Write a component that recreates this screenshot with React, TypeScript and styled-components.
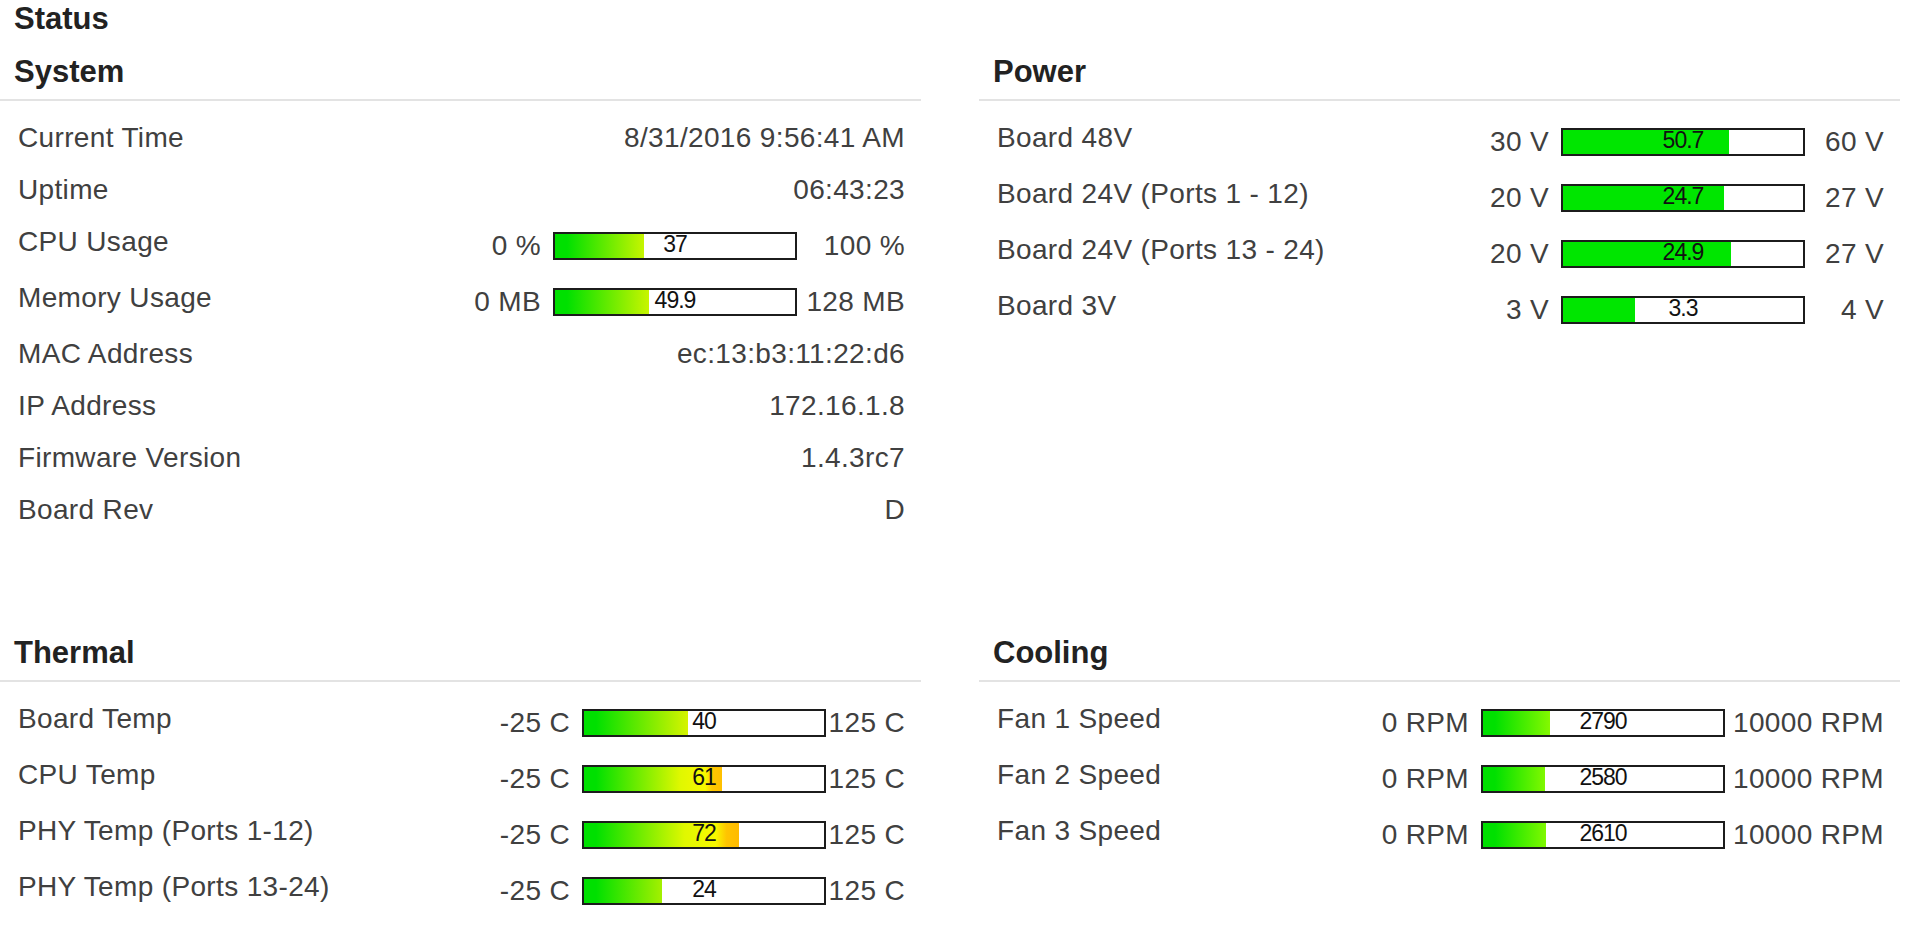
import React from "react";
import styled, { createGlobalStyle } from "styled-components";

interface Meter {
  min: string;
  max: string;
  lo: number;
  hi: number;
  value: number;
  text: string;
  fill: string;
}

interface StatRow {
  label: string;
  value?: string;
  meter?: Meter;
}

interface Section {
  title: string;
  maxWidth: number;
  rows: StatRow[];
}

// warm ramp: green at the start of the fill, a value-dependent colour at its end
const ramp = (...stops: string[]) =>
  `linear-gradient(90deg, #00e000 12px, ${stops.join(", ")})`;
const SOLID = "#00e600";

const system: Section = {
  title: "System",
  maxWidth: 108,
  rows: [
    { label: "Current Time", value: "8/31/2016 9:56:41 AM" },
    { label: "Uptime", value: "06:43:23" },
    {
      label: "CPU Usage",
      meter: { min: "0 %", max: "100 %", lo: 0, hi: 100, value: 37, text: "37", fill: ramp("#c6f500 100%") },
    },
    {
      label: "Memory Usage",
      meter: { min: "0 MB", max: "128 MB", lo: 0, hi: 128, value: 49.9, text: "49.9", fill: ramp("#c8f500 100%") },
    },
    { label: "MAC Address", value: "ec:13:b3:11:22:d6" },
    { label: "IP Address", value: "172.16.1.8" },
    { label: "Firmware Version", value: "1.4.3rc7" },
    { label: "Board Rev", value: "D" },
  ],
};

const power: Section = {
  title: "Power",
  maxWidth: 79,
  rows: [
    { label: "Board 48V", meter: { min: "30 V", max: "60 V", lo: 30, hi: 60, value: 50.7, text: "50.7", fill: SOLID } },
    { label: "Board 24V (Ports 1 - 12)", meter: { min: "20 V", max: "27 V", lo: 20, hi: 27, value: 24.7, text: "24.7", fill: SOLID } },
    { label: "Board 24V (Ports 13 - 24)", meter: { min: "20 V", max: "27 V", lo: 20, hi: 27, value: 24.9, text: "24.9", fill: SOLID } },
    { label: "Board 3V", meter: { min: "3 V", max: "4 V", lo: 3, hi: 4, value: 3.3, text: "3.3", fill: SOLID } },
  ],
};

const thermal: Section = {
  title: "Thermal",
  maxWidth: 79,
  rows: [
    { label: "Board Temp", meter: { min: "-25 C", max: "125 C", lo: -25, hi: 125, value: 40, text: "40", fill: ramp("#d6f400 100%") } },
    {
      label: "CPU Temp",
      meter: { min: "-25 C", max: "125 C", lo: -25, hi: 125, value: 61, text: "61", fill: ramp("#e0f800 70%", "#f8f800 88%", "#ffc800 93%", "#ffc000 100%") },
    },
    {
      label: "PHY Temp (Ports 1-12)",
      meter: { min: "-25 C", max: "125 C", lo: -25, hi: 125, value: 72, text: "72", fill: ramp("#e0f800 65%", "#f8f800 85%", "#ffc400 92%", "#ffbb00 100%") },
    },
    { label: "PHY Temp (Ports 13-24)", meter: { min: "-25 C", max: "125 C", lo: -25, hi: 125, value: 24, text: "24", fill: ramp("#a4f000 100%") } },
  ],
};

const cooling: Section = {
  title: "Cooling",
  maxWidth: 159,
  rows: [
    { label: "Fan 1 Speed", meter: { min: "0 RPM", max: "10000 RPM", lo: 0, hi: 10000, value: 2790, text: "2790", fill: ramp("#84f800 100%") } },
    { label: "Fan 2 Speed", meter: { min: "0 RPM", max: "10000 RPM", lo: 0, hi: 10000, value: 2580, text: "2580", fill: ramp("#80f800 100%") } },
    { label: "Fan 3 Speed", meter: { min: "0 RPM", max: "10000 RPM", lo: 0, hi: 10000, value: 2610, text: "2610", fill: ramp("#80f800 100%") } },
  ],
};

const sections = [system, power, thermal, cooling];

const App = () => {
  return (
    <Page>
      <GlobalStyle />
      <PageTitle>Status</PageTitle>
      <Grid>
        {sections.map((section) => (
          <Panel key={section.title}>
            <PanelTitle>{section.title}</PanelTitle>
            <RowList>
              {section.rows.map((row) => (
                <Row key={row.label}>
                  <Label>{row.label}</Label>
                  {row.meter ? (
                    <Range>
                      <MinLabel>{row.meter.min}</MinLabel>
                      <Bar>
                        <Fill
                          $fill={row.meter.fill}
                          style={{
                            width: `${((row.meter.value - row.meter.lo) / (row.meter.hi - row.meter.lo)) * 100}%`,
                          }}
                        />
                        <BarText>{row.meter.text}</BarText>
                      </Bar>
                      <MaxLabel $width={section.maxWidth}>{row.meter.max}</MaxLabel>
                    </Range>
                  ) : (
                    <Value>{row.value}</Value>
                  )}
                </Row>
              ))}
            </RowList>
          </Panel>
        ))}
      </Grid>
    </Page>
  );
};
export default App;

const GlobalStyle = createGlobalStyle`
  html, body {
    margin: 0;
    padding: 0;
    background: #fff;
  }

  body {
    font-family: "Liberation Sans", Arial, sans-serif;
    color: #404040;
  }
`;

const Page = styled.div`
  width: 1924px;
  min-height: 926px;
  box-sizing: border-box;
`;

const PageTitle = styled.h1`
  margin: 2px 0 0;
  padding: 0 14px;
  font-size: 31px;
  line-height: 34px;
  font-weight: bold;
  color: #222;
`;

const Grid = styled.div`
  display: grid;
  grid-template-columns: 921px 921px;
  column-gap: 58px;
  row-gap: 100px;
  margin-top: 19px;
`;

const Panel = styled.section`
  display: flex;
  flex-direction: column;
`;

const PanelTitle = styled.h2`
  margin: 0;
  padding: 0 14px 10px;
  font-size: 31px;
  line-height: 34px;
  font-weight: bold;
  color: #222;
  border-bottom: 2px solid #e3e3e3;
`;

const RowList = styled.div`
  display: flex;
  flex-direction: column;
  padding-top: 11px;
`;

const Row = styled.div`
  display: flex;
  justify-content: space-between;
  align-items: flex-start;
  padding: 10px 16px 10px 18px;
  font-size: 28px;
  line-height: 32px;
  letter-spacing: 0.35px;
`;

const Label = styled.span`
  white-space: nowrap;
`;

const Value = styled.span`
  white-space: nowrap;
  text-align: right;
`;

const Range = styled.div`
  display: flex;
  align-items: center;
  margin-top: 4px;
`;

const MinLabel = styled.span`
  margin-right: 12px;
  white-space: nowrap;
  text-align: right;
`;

const MaxLabel = styled.span<{ $width: number }>`
  width: ${(props) => props.$width}px;
  flex-shrink: 0;
  white-space: nowrap;
  text-align: right;
`;

const Bar = styled.div`
  position: relative;
  flex-shrink: 0;
  width: 244px;
  height: 28px;
  box-sizing: border-box;
  border: 2px solid #1c1c1c;
  background: #fff;
`;

const Fill = styled.div<{ $fill: string }>`
  height: 100%;
  background: ${(props) => props.$fill};
`;

const BarText = styled.span`
  position: absolute;
  top: 0;
  left: 0;
  right: 0;
  text-align: center;
  font-size: 23px;
  line-height: 20px;
  letter-spacing: -1px;
  color: #111;
`;
